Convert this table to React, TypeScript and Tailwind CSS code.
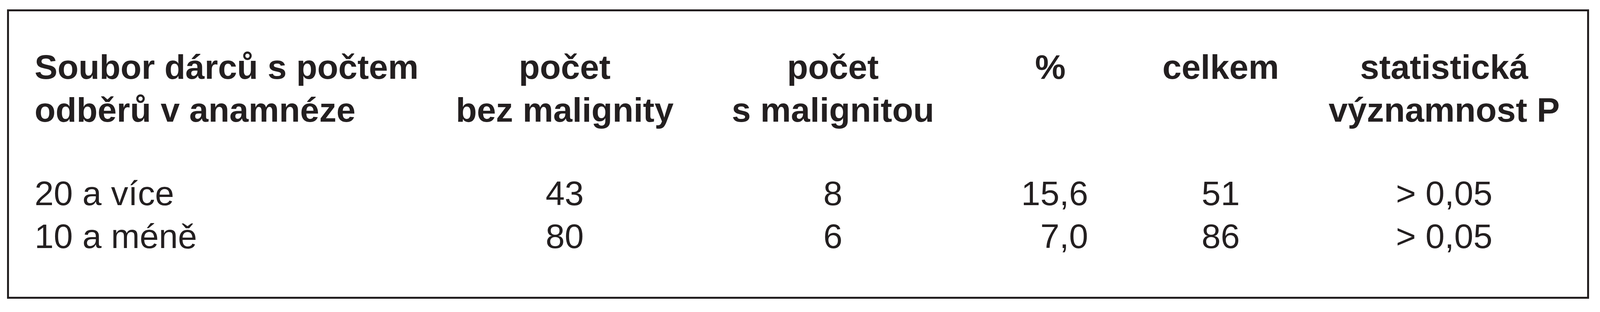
const headers = [
  { lines: ["Soubor dárců s počtem", "odběrů v anamnéze"], align: "text-left" },
  { lines: ["počet", "bez malignity"], align: "text-center" },
  { lines: ["počet", "s malignitou"], align: "text-center" },
  { lines: ["%"], align: "text-center" },
  { lines: ["celkem"], align: "text-center" },
  { lines: ["statistická", "významnost P"], align: "text-center" },
];

const rows = [
  { group: "20 a více", without: "43", withM: "8", pct: "15,6", total: "51", p: "> 0,05" },
  { group: "10 a méně", without: "80", withM: "6", pct: "7,0", total: "86", p: "> 0,05" },
];

// column widths taken from the reference, as shares of the row
const gridCols = "grid grid-cols-[1436fr_800fr_1058fr_448fr_732fr_816fr]";

export default function App() {
  return (
    <div
      className="w-full h-[800px] bg-white pt-[24px] text-[#231f20]"
      style={{ fontFamily: '"Liberation Sans Narrow", "Liberation Sans", Arial, Helvetica, sans-serif' }}
    >
      <div className="ml-[0.433%] mr-[0.686%] h-[742px] border-[5px] border-[#231f20] pt-[88px] pl-[1.607%] pr-[1.57%] text-[88px] leading-[110px]">
        {/* Header */}
        <div className={`${gridCols} font-bold`}>
          {headers.map((h, i) => (
            <div key={i} className={`${h.align} whitespace-nowrap`}>
              {h.lines.map((l) => (
                <div key={l}>{l}</div>
              ))}
            </div>
          ))}
        </div>

        {/* Data */}
        <div className="mt-[104px]">
          {rows.map((r) => (
            <div key={r.group} className={gridCols}>
              <div className="text-left whitespace-nowrap">{r.group}</div>
              <div className="text-center">{r.without}</div>
              <div className="text-center">{r.withM}</div>
              <div className="text-center">
                <span className="inline-block min-w-[2.2em] text-right">{r.pct}</span>
              </div>
              <div className="text-center">{r.total}</div>
              <div className="text-center whitespace-nowrap">{r.p}</div>
            </div>
          ))}
        </div>
      </div>
    </div>
  );
}
